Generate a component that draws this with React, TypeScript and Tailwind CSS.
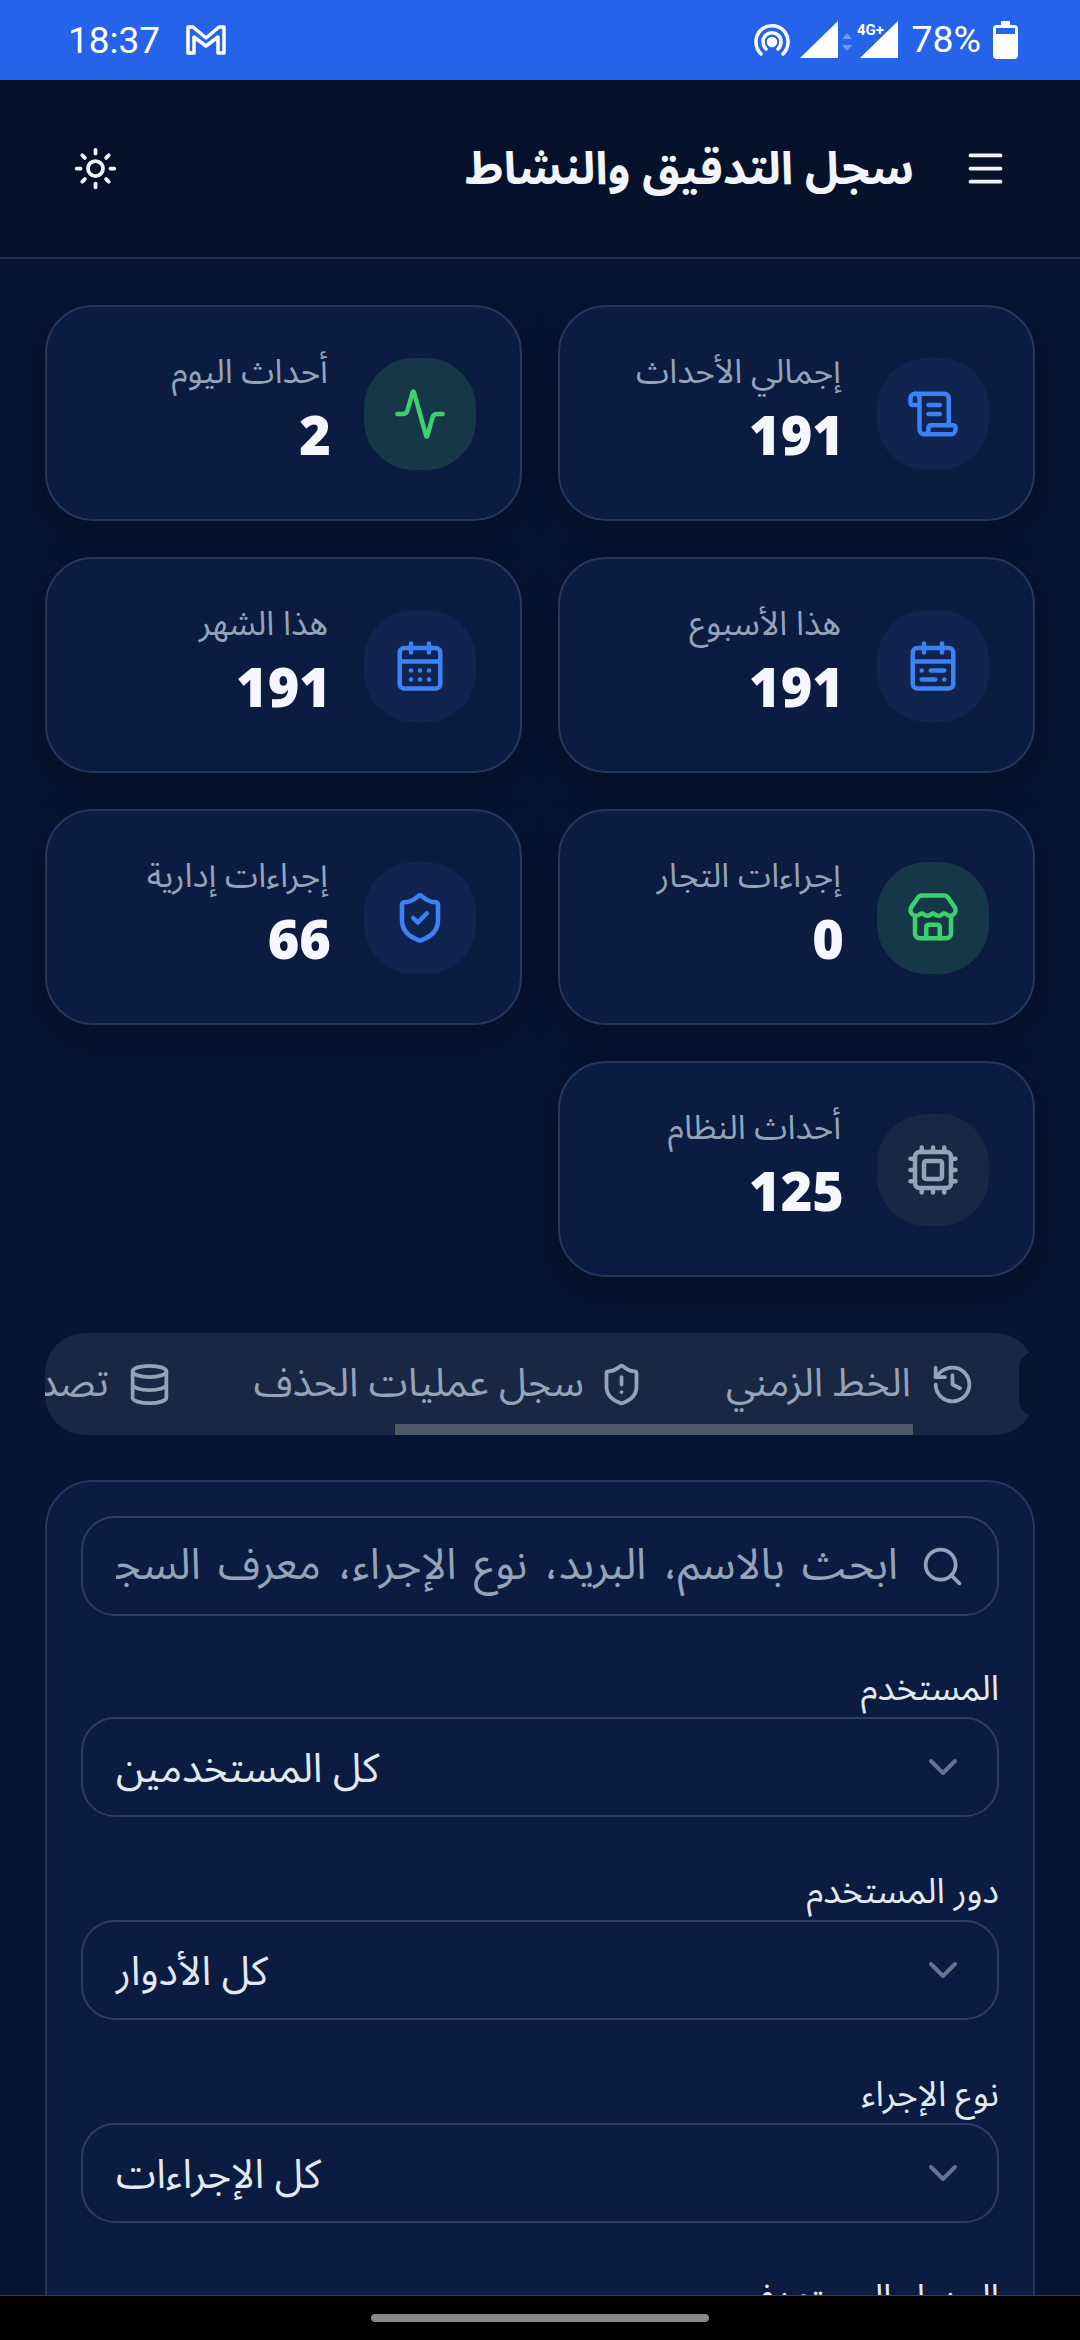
import { Activity, CalendarDays, CalendarRange, ChevronDown, Cpu, Database, History, Menu, ScrollText, Search, ShieldAlert, ShieldCheck, Store, Sun } from "lucide-react";
import type { ReactNode } from "react";

function StatCard({ icon, tone, label, value }: { icon: ReactNode; tone: string; label: string; value: string }) {
  return (
    <div className="flex h-[216px] items-center gap-[36px] rounded-[48px] border-[2px] border-[#27365a] bg-[#0c1b40] pr-[44px] shadow-[0_12px_36px_rgba(0,0,0,0.28)]">
      <div className={`mt-[1px] flex h-[112px] w-[112px] shrink-0 items-center justify-center rounded-[50px] ${tone}`}>{icon}</div>
      <div className="flex min-w-0 flex-col">
        <span className="h-[48px] whitespace-nowrap text-[33.5px] leading-[36px] text-[#94a3b8]">{label}</span>
        <span className="-mr-[3px] h-[68px] font-['Open_Sans',sans-serif] text-[54px] font-extrabold leading-[62px] text-[#f4f7fd]">{value}</span>
      </div>
    </div>
  );
}

function SelectRow({ label, value }: { label: string; value: string }) {
  return (
    <div className="flex flex-col">
      <span className="h-[48px] whitespace-nowrap text-[35px] leading-[40px] text-[#e2e8f0]">{label}</span>
      <div className="flex h-[100px] items-center justify-between rounded-[34px] border-[2px] border-[#2f3e5f] bg-[#0c1b40] pl-[33px] pr-[30px]">
        <ChevronDown size={48} strokeWidth={2} className="text-[#64748b]" />
        <span className="whitespace-nowrap pt-[4px] text-[40.5px] text-[#e2e8f0]">{value}</span>
      </div>
    </div>
  );
}

export default function App() {
  return (
    <div dir="rtl" className="flex h-[2340px] w-[1080px] flex-col overflow-hidden bg-[#071433] font-['Noto_Sans_Arabic','Cairo','Noto_Kufi_Arabic','Noto_Sans','DejaVu_Sans',sans-serif]">
      <div dir="ltr" className="flex h-[80px] shrink-0 items-center justify-between bg-[#2563eb] pl-[68px] pr-[62px] font-['Roboto',sans-serif] text-white">
        <div className="flex items-center gap-[25px]">
          <span className="text-[37px] leading-none">18:37</span>
          <svg width="42" height="32" viewBox="0 0 42 32" fill="none" stroke="white" strokeWidth="3.5" strokeLinejoin="round">
            <path d="M3 3h5l13 11L34 3h5v26h-6V13L21 22 9 13v16H3z" />
          </svg>
        </div>
        <div className="flex items-center">
          <svg width="38" height="34" viewBox="0 0 38 34" fill="none" stroke="white" strokeWidth="3.5" strokeLinecap="round">
            <path d="M8 31C2 25 1 15 7 8c6-7 18-7 24 0 6 7 5 17-1 23" />
            <path d="M13 26c-4-4-4-11 0-14 3-3 9-3 12 0 4 3 4 10 0 14" />
            <circle cx="19" cy="19" r="3.5" fill="white" />
          </svg>
          <svg width="100" height="38" viewBox="0 0 100 38" className="ml-[9px]">
            <path d="M0 37 38 0v37z" fill="white" />
            <path d="M60 37 98 0v37z" fill="white" />
            <path d="M47 12l5 6H42zM47 30l5-6H42z" fill="#6d9cf4" />
            <text x="57" y="14" fontSize="15" fontWeight="700" fill="white" fontFamily="Roboto">4G+</text>
          </svg>
          <span className="ml-[11px] text-[37.5px] leading-none">78%</span>
          <svg width="25" height="38" viewBox="0 0 25 38" className="ml-[12px]">
            <path d="M8 0h9v4h4a4 4 0 0 1 4 4v26a4 4 0 0 1-4 4H4a4 4 0 0 1-4-4V8a4 4 0 0 1 4-4h4z" fill="white" />
            <rect x="3" y="7" width="19" height="6" fill="#2563eb" />
          </svg>
        </div>
      </div>

      <header className="flex h-[179px] shrink-0 items-center justify-between border-b-[2px] border-[#242f4a] bg-[#06122c] pl-[73px] pr-[72px]">
        <div className="flex items-center gap-[49px]">
          <Menu size={45} strokeWidth={2} className="text-[#f1f5f9]" />
          <h1 className="whitespace-nowrap pt-[2px] text-[45.5px] font-bold leading-none text-[#f1f5f9]">سجل التدقيق والنشاط</h1>
        </div>
        <Sun size={45} strokeWidth={2} className="text-[#f1f5f9]" />
      </header>

      <main className="min-h-0 flex-1 overflow-hidden px-[45px] pt-[46px]">
        <div className="grid grid-cols-2 gap-[36px]">
          <StatCard icon={<ScrollText size={54} className="text-[#3b82f6]" />} tone="bg-[#11244f]" label="إجمالي الأحداث" value="191" />
          <StatCard icon={<Activity size={54} className="text-[#3dd06e]" />} tone="bg-[#163748]" label="أحداث اليوم" value="2" />
          <StatCard icon={<CalendarRange size={54} className="text-[#3b82f6]" />} tone="bg-[#11244f]" label="هذا الأسبوع" value="191" />
          <StatCard icon={<CalendarDays size={54} className="text-[#3b82f6]" />} tone="bg-[#11244f]" label="هذا الشهر" value="191" />
          <StatCard icon={<Store size={54} className="text-[#3dd06e]" />} tone="bg-[#163748]" label="إجراءات التجار" value="0" />
          <StatCard icon={<ShieldCheck size={54} className="text-[#3b82f6]" />} tone="bg-[#11244f]" label="إجراءات إدارية" value="66" />
          <StatCard icon={<Cpu size={54} className="text-[#94a3b8]" />} tone="bg-[#1a2744]" label="أحداث النظام" value="125" />
        </div>

        <div className="relative mt-[56px] flex h-[102px] items-center gap-[82px] overflow-hidden rounded-[40px] bg-[#1a2744] text-[39.5px] text-[#94a3b8]">
          <div className="-ml-[38px] h-[64px] w-[16px] shrink-0 rounded-l-[32px] bg-[#071430]" />
          <div className="flex shrink-0 items-center gap-[19px]">
            <History size={45} />
            <span className="whitespace-nowrap">الخط الزمني</span>
          </div>
          <div className="flex shrink-0 items-center gap-[15px]">
            <ShieldAlert size={45} />
            <span className="whitespace-nowrap">سجل عمليات الحذف</span>
          </div>
          <div className="flex shrink-0 items-center gap-[18px]">
            <Database size={45} />
            <span className="whitespace-nowrap">تصدير السجلات</span>
          </div>
          <div className="absolute bottom-0 left-[350px] h-[11px] w-[518px] bg-[#4f5868]" />
        </div>

        <div className="mt-[45px] flex flex-col gap-[53px] rounded-[48px] border-[2px] border-[#27365a] bg-[#0c1b40] px-[34px] pb-[60px] pt-[34px]">
          <div className="flex h-[100px] items-center gap-[22px] rounded-[34px] border-[2px] border-[#2f3e5f] pl-[33px] pr-[32px]">
            <Search size={45} className="shrink-0 text-[#94a3b8]" />
            <div className="min-w-0 flex-1 overflow-hidden whitespace-nowrap text-[43px] text-[#94a3b8] [word-spacing:6px]">ابحث بالاسم، البريد، نوع الإجراء، معرف السجل</div>
          </div>
          <div className="flex flex-col gap-[55px]">
            <SelectRow label="المستخدم" value="كل المستخدمين" />
            <SelectRow label="دور المستخدم" value="كل الأدوار" />
            <SelectRow label="نوع الإجراء" value="كل الإجراءات" />
            <SelectRow label="الجدول المستهدف" value="كل الجداول" />
          </div>
        </div>
      </main>

      <div className="flex h-[45px] shrink-0 items-center justify-center border-t-[1px] border-[#3a3f4a] bg-black">
        <div className="h-[8px] w-[338px] rounded-full bg-[#888888]" />
      </div>
    </div>
  );
}
